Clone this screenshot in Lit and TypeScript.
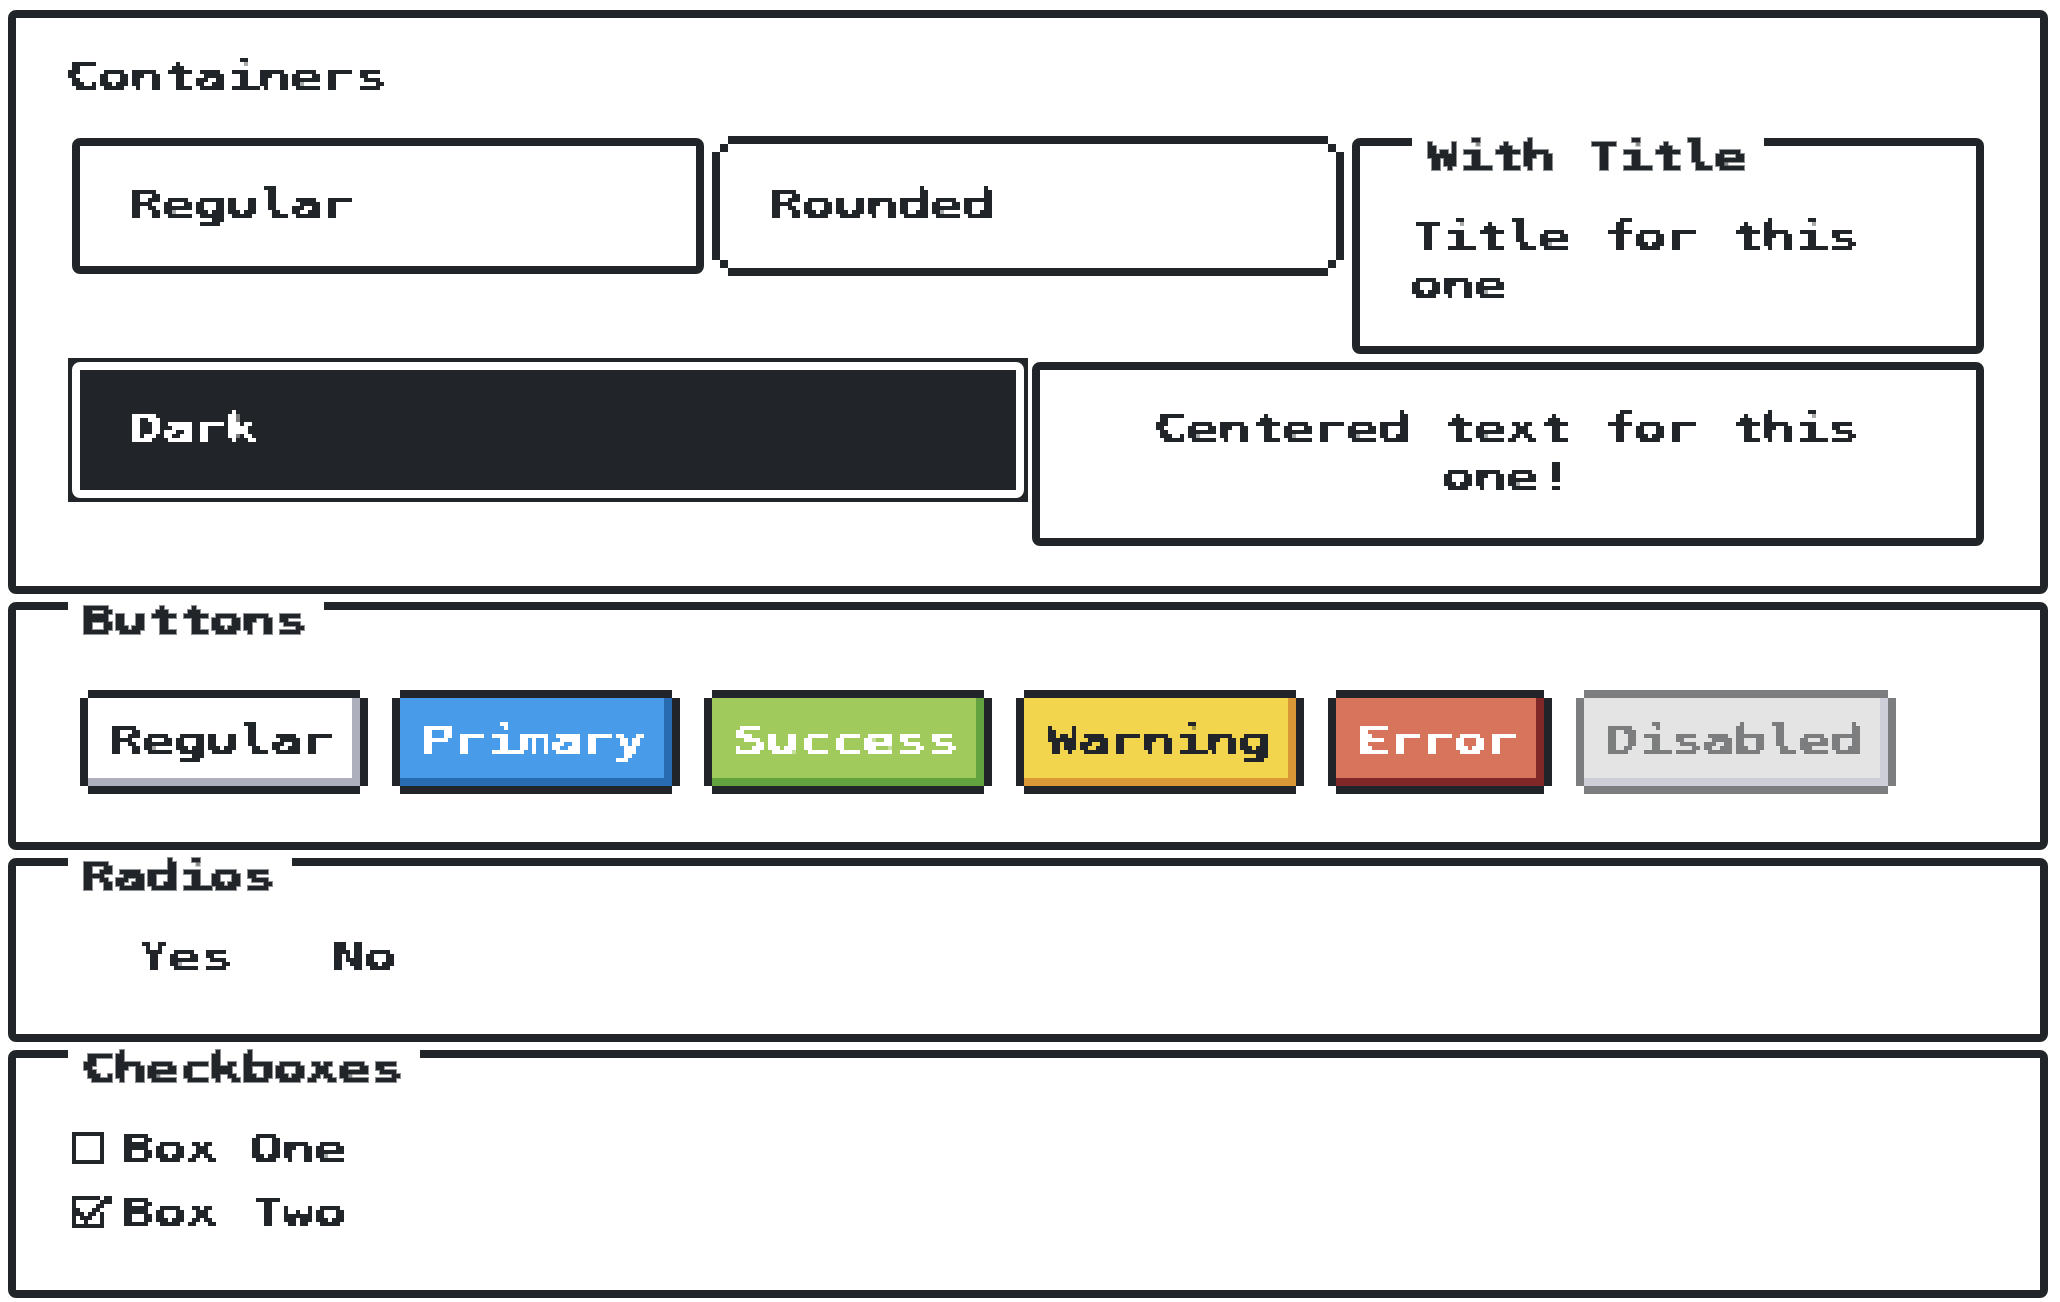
import { LitElement, html, css, svg } from "lit";
import { customElement, property } from "lit/decorators.js";

/** Letters that sit half a cell further right, or are drawn slimmer, inside their advance. */
const FITTED = /([itlf]+|[TYWc!])/;
const FIT_CLASS: Record<string, string> = { W: "wide", T: "slim", Y: "slim", "!": "bang", c: "curve" };

/** One line of monospaced text on a 32px advance, snapped to a 4px pixel grid. */
@customElement("pixel-text")
export class PixelText extends LitElement {
  @property() text = "";
  @property({ type: Boolean }) heavy = false;

  static styles = css`
    :host {
      display: block;
      height: 48px;
      flex: none;
    }
    .defs {
      position: absolute;
      width: 0;
      height: 0;
    }
    .line {
      height: 48px;
      filter: url(#pixels);
    }
    .line.heavy {
      filter: url(#pixels-heavy);
    }
    .glyphs {
      display: block;
      width: max-content;
      font: bold 38.4px/48px "DejaVu Sans Mono", monospace;
      letter-spacing: -1.05px;
      white-space: pre;
      transform: translate(-3.3px, 2.3px) scaleX(1.45);
      transform-origin: 0 0;
    }
    .shift {
      position: relative;
      left: 1.4px;
    }
    .slim,
    .wide,
    .curve,
    .bang {
      display: inline-block;
      transform: translateX(1.4px) scaleX(0.84);
    }
    .wide {
      transform: translateX(0.4px) scaleX(0.92);
    }
    .curve {
      transform: translate(0.9px, 0.4px) scale(0.97, 0.99);
    }
    .bang {
      transform: translate(1.4px, 1px) scale(1.35, 0.97);
    }
  `;

  private cells() {
    return svg`
      <feFlood x="1" y="1" width="1" height="1" flood-color="#000" result="dot"></feFlood>
      <feOffset in="dot" x="0" y="0" width="4" height="4" dx="0" dy="0" result="cell"></feOffset>
      <feTile in="cell" result="grid"></feTile>
      <feGaussianBlur in="SourceGraphic" stdDeviation="0.9" result="soft"></feGaussianBlur>
      <feComponentTransfer in="soft" result="hard">
        <feFuncA type="linear" slope="200" intercept="-100"></feFuncA>
      </feComponentTransfer>
      <feComposite in="hard" in2="grid" operator="in" result="s0"></feComposite>
      <feOffset in="s0" dx="1" dy="0" result="o1"></feOffset>
      <feMerge result="s1"><feMergeNode in="s0"></feMergeNode><feMergeNode in="o1"></feMergeNode></feMerge>
      <feOffset in="s1" dx="2" dy="0" result="o2"></feOffset>
      <feMerge result="s2"><feMergeNode in="s1"></feMergeNode><feMergeNode in="o2"></feMergeNode></feMerge>
      <feOffset in="s2" dx="0" dy="1" result="o3"></feOffset>
      <feMerge result="s3"><feMergeNode in="s2"></feMergeNode><feMergeNode in="o3"></feMergeNode></feMerge>
      <feOffset in="s3" dx="0" dy="2" result="o4"></feOffset>
      <feMerge result="s4"><feMergeNode in="s3"></feMergeNode><feMergeNode in="o4"></feMergeNode></feMerge>
      <feOffset in="s4" dx="-1" dy="-1" result="px"></feOffset>`;
  }

  private glyphs() {
    return this.text
      .split(FITTED)
      .map((part, i) => (i % 2 ? html`<span class=${FIT_CLASS[part] ?? "shift"}>${part}</span>` : part));
  }

  render() {
    return html`
      <svg class="defs" aria-hidden="true">
        <filter id="pixels" filterUnits="userSpaceOnUse" x="-4" y="-4" width="800" height="56" color-interpolation-filters="sRGB">
          ${this.cells()}
        </filter>
        <filter id="pixels-heavy" filterUnits="userSpaceOnUse" x="-4" y="-4" width="800" height="56" color-interpolation-filters="sRGB">
          ${this.cells()}
          <feMorphology in="px" operator="dilate" radius="1" result="fat"></feMorphology>
          <feComponentTransfer in="fat" result="edge"><feFuncA type="linear" slope="0.5"></feFuncA></feComponentTransfer>
          <feMerge><feMergeNode in="edge"></feMergeNode><feMergeNode in="px"></feMergeNode></feMerge>
        </filter>
      </svg>
      <div class="line ${this.heavy ? "heavy" : ""}" style="width:${this.text.length * 32}px">
        <span class="glyphs">${this.glyphs()}</span>
      </div>
    `;
  }
}

const BUTTONS = [
  ["Regular", "regular"],
  ["Primary", "primary"],
  ["Success", "success"],
  ["Warning", "warning"],
  ["Error", "error"],
  ["Disabled", "disabled"],
];

@customElement("app-root")
export class AppRoot extends LitElement {
  static styles = css`
    :host {
      display: flex;
      flex-direction: column;
      gap: 8px;
      box-sizing: border-box;
      height: 1302px;
      padding: 10px 12px 4px 8px;
      background: #fff;
      color: #212529;
      overflow: hidden;
    }
    .box {
      box-sizing: border-box;
      border: 8px solid #212529;
      border-radius: 8px;
      padding: 32px 52px 40px;
    }
    .titled {
      padding-top: 0;
    }
    .legend {
      width: max-content;
      margin: -16px 0 32px;
      padding: 0 16px;
      background: #fff;
    }
    .panel {
      padding-bottom: 56px;
    }
    .rows {
      display: flex;
      flex-direction: column;
      gap: 8px;
      margin: 40px 4px 0;
    }
    .row {
      display: grid;
      grid-auto-flow: column;
      grid-auto-columns: minmax(0, 1fr);
      gap: 8px;
      align-items: start;
    }
    .rounded {
      box-sizing: border-box;
      height: 136px;
      margin: 0 8px;
      padding: 40px 52px;
      position: relative;
    }
    .rounded .frame {
      position: absolute;
      left: -8px;
      top: -2px;
      width: calc(100% + 16px);
      height: 140px;
    }
    .frame i {
      position: absolute;
      background: #212529;
    }
    .bar-t, .bar-b { left: 16px; right: 16px; height: 8px; }
    .bar-t { top: 0; }
    .bar-b { bottom: 0; }
    .bar-l, .bar-r { top: 16px; bottom: 16px; width: 8px; }
    .bar-l { left: 0; }
    .bar-r { right: 0; }
    .c1, .c2, .c3, .c4 { width: 8px; height: 8px; }
    .c1 { left: 8px; top: 8px; }
    .c2 { right: 8px; top: 8px; }
    .c3 { left: 8px; bottom: 8px; }
    .c4 { right: 8px; bottom: 8px; }
    .dark-wrap {
      margin: -4px;
      padding: 4px;
      background: #212529;
    }
    .dark {
      border-color: #fff;
      background: #212529;
      color: #fff;
    }
    .centered {
      display: flex;
      flex-direction: column;
      align-items: center;
    }
    .buttons {
      display: flex;
      gap: 40px;
      padding: 24px 20px 0;
    }
    .btn {
      padding: 16px 24px;
      height: 56px;
      background: #fff;
      box-shadow: inset -8px -8px 0 #adafbc, 0 8px #212529, 0 -8px #212529, 8px 0 #212529, -8px 0 #212529;
    }
    .primary { background: #489be8; color: #fff; box-shadow: inset -8px -8px 0 #296bb0, 0 8px #212529, 0 -8px #212529, 8px 0 #212529, -8px 0 #212529; }
    .success { background: #a0cb5c; color: #fff; box-shadow: inset -8px -8px 0 #62a340, 0 8px #212529, 0 -8px #212529, 8px 0 #212529, -8px 0 #212529; }
    .warning { background: #f2d54d; box-shadow: inset -8px -8px 0 #d99735, 0 8px #212529, 0 -8px #212529, 8px 0 #212529, -8px 0 #212529; }
    .error { background: #d8735c; color: #fff; box-shadow: inset -8px -8px 0 #802727, 0 8px #212529, 0 -8px #212529, 8px 0 #212529, -8px 0 #212529; }
    .disabled { background: #e4e4e4; color: #7c7d7e; box-shadow: inset -8px -8px 0 #cdced8, 0 8px #7c7d7e, 0 -8px #7c7d7e, 8px 0 #7c7d7e, -8px 0 #7c7d7e; }
    .radios {
      display: flex;
      gap: 100px;
      padding-left: 70px;
    }
    .checks {
      display: flex;
      flex-direction: column;
      gap: 16px;
      padding-left: 4px;
    }
    .check {
      display: flex;
      gap: 12px;
    }
    .check svg {
      width: 40px;
      height: 32px;
      margin-top: 10px;
      flex: none;
    }
  `;

  private legend(text: string) {
    return html`<div class="legend"><pixel-text heavy .text=${text}></pixel-text></div>`;
  }

  render() {
    return html`
      <section class="box">
        <pixel-text .text=${"Containers"}></pixel-text>
        <div class="rows">
          <div class="row">
            <div class="box"><pixel-text .text=${"Regular"}></pixel-text></div>
            <div class="rounded">
              <div class="frame">
                <i class="bar-t"></i><i class="bar-b"></i><i class="bar-l"></i><i class="bar-r"></i>
                <i class="c1"></i><i class="c2"></i><i class="c3"></i><i class="c4"></i>
              </div>
              <pixel-text .text=${"Rounded"}></pixel-text>
            </div>
            <div class="box titled">
              ${this.legend("With Title")}
              <pixel-text .text=${"Title for this"}></pixel-text>
              <pixel-text .text=${"one"}></pixel-text>
            </div>
          </div>
          <div class="row">
            <div class="dark-wrap"><div class="box dark"><pixel-text .text=${"Dark"}></pixel-text></div></div>
            <div class="box centered">
              <pixel-text .text=${"Centered text for this"}></pixel-text>
              <pixel-text .text=${"one!"}></pixel-text>
            </div>
          </div>
        </div>
      </section>

      <section class="box titled panel">
        ${this.legend("Buttons")}
        <div class="buttons">
          ${BUTTONS.map(([label, kind]) => html`<div class="btn ${kind}" role="button"><pixel-text .text=${label}></pixel-text></div>`)}
        </div>
      </section>

      <section class="box titled panel">
        ${this.legend("Radios")}
        <div class="radios">
          <pixel-text .text=${"Yes"}></pixel-text>
          <pixel-text .text=${"No"}></pixel-text>
        </div>
      </section>

      <section class="box titled panel">
        ${this.legend("Checkboxes")}
        <div class="checks">
          <div class="check">
            <svg viewBox="0 0 10 8" shape-rendering="crispEdges"><path fill="#212529" fill-rule="evenodd" d="M0 0h8v8H0zM1 1v6h6V1z"/></svg>
            <pixel-text .text=${"Box One"}></pixel-text>
          </div>
          <div class="check">
            <svg viewBox="0 0 10 8" shape-rendering="crispEdges"><path fill="#212529" d="M0 0h7v1H0zM8 0h2v1H8zM0 1h1v6H0zM7 1h3v1H7zM6 2h2v1H6zM1 3h1v1H1zM5 3h2v1H5zM1 4h2v1H1zM4 4h2v1H4zM7 4h1v3H7zM2 5h3v1H2zM3 6h1v1H3zM0 7h8v1H0z"/></svg>
            <pixel-text .text=${"Box Two"}></pixel-text>
          </div>
        </div>
      </section>
    `;
  }
}
